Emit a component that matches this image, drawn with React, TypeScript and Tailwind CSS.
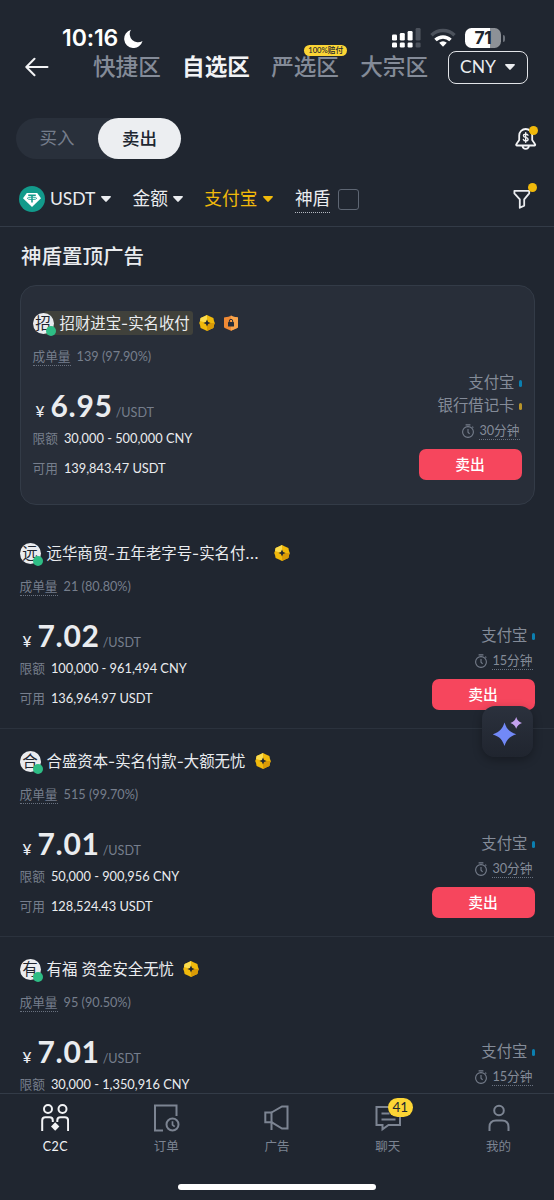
import type { ReactNode } from "react";

type Pay = { label: string; color: string };

type Ad = {
  name: string;
  avatar: string;
  orders: string;
  price: string;
  limit: string;
  available?: string;
  minutes: string;
  pays: Pay[];
};

const ALIPAY: Pay = { label: "支付宝", color: "bg-[#0b7fb0]" };
const BANK: Pay = { label: "银行借记卡", color: "bg-[#b8942a]" };

const topAd: Ad = {
  name: "招财进宝-实名收付",
  avatar: "招",
  orders: "139 (97.90%)",
  price: "6.95",
  limit: "30,000 - 500,000 CNY",
  available: "139,843.47 USDT",
  minutes: "30分钟",
  pays: [ALIPAY, BANK],
};

const ads: Ad[] = [
  {
    name: "远华商贸-五年老字号-实名付...",
    avatar: "远",
    orders: "21 (80.80%)",
    price: "7.02",
    limit: "100,000 - 961,494 CNY",
    available: "136,964.97 USDT",
    minutes: "15分钟",
    pays: [ALIPAY],
  },
  {
    name: "合盛资本-实名付款-大额无忧",
    avatar: "合",
    orders: "515 (99.70%)",
    price: "7.01",
    limit: "50,000 - 900,956 CNY",
    available: "128,524.43 USDT",
    minutes: "30分钟",
    pays: [ALIPAY],
  },
  {
    name: "有福 资金安全无忧",
    avatar: "有",
    orders: "95 (90.50%)",
    price: "7.01",
    limit: "30,000 - 1,350,916 CNY",
    minutes: "15分钟",
    pays: [ALIPAY],
  },
];

function Caret({ className }: { className?: string }) {
  return (
    <svg viewBox="0 0 10 6" fill="currentColor" className={className}>
      <path d="M.8 0h8.4c.7 0 1 .7.5 1.200L5.700 5.600a1 1 0 0 1-1.400 0L.3 1.200C-.2.7.1 0 .8 0z" />
    </svg>
  );
}

function MerchantBadge() {
  return (
    <svg viewBox="0 0 16 18" className="h-[18px] w-4 shrink-0">
      <path d="M8 1l3 1.600 3.400 1.400.6 3 .8 2-.8 2-.6 3L11 15.400 8 17l-3-1.600L1.600 14 1 11 .2 9 1 7l.6-3L5 2.600z" fill="#f0b90b" />
      <path d="M8 1L5 2.600 1.600 4 1 7 8 9z" fill="#fbdc4e" />
      <path d="M15.800 9l-.8 2-.6 3-3.400 1.400L8 17V9z" fill="#d99a06" />
      <path d="M8 5.400l1.100 2.500L11.600 9l-2.500 1.100L8 12.600l-1.100-2.500L4.400 9l2.500-1.100z" fill="#202630" />
    </svg>
  );
}

function ShieldBadge() {
  return (
    <svg viewBox="0 0 16 16" className="h-4 w-4 shrink-0">
      <path d="M2 2.200C4.500 2 6.500 1.400 8 .4c1.500 1 3.500 1.600 6 1.800.6 0 1 .4 1 1v8.600c0 .6-.3 1-.8 1.200L8 15.800 1.800 13c-.5-.2-.8-.6-.8-1.200V3.200c0-.6.4-1 1-1z" fill="#f08a35" />
      <path d="M8 .4c1.500 1 3.500 1.600 6 1.800.6 0 1 .4 1 1v8.600c0 .6-.3 1-.8 1.200L8 15.800z" fill="#f9a54c" />
      <rect x="5" y="7" width="6" height="4.400" rx=".5" fill="#282e39" />
      <path d="M6.300 7V6a1.700 1.700 0 0 1 3.400 0v1" fill="none" stroke="#282e39" strokeWidth={1} />
    </svg>
  );
}

function TimerIcon() {
  return (
    <svg viewBox="0 0 14 14" fill="none" stroke="currentColor" strokeWidth={1.100} className="h-[14px] w-[14px] text-[#757d8b]">
      <circle cx="7" cy="8" r="5.400" />
      <path d="M4.600.9h4.800M7 5v3.200l1.600 1.600M11.300 2.700l1 1" />
    </svg>
  );
}

function TetherIcon() {
  return (
    <svg viewBox="0 0 26 26" className="h-[26px] w-[26px]">
      <circle cx="13" cy="13" r="13" fill="#129a8b" />
      <path d="M7.800 6.900h10.400l3.800 5.300L13 21l-9-8.800z" fill="#fff" />
      <path d="M9.200 9.300h7.600M13 9.300v7.200" stroke="#129a8b" strokeWidth={1.500} fill="none" />
      <ellipse cx="13" cy="12.300" rx="4.700" ry="1.200" stroke="#129a8b" strokeWidth={0.900} fill="none" />
    </svg>
  );
}

function BellIcon() {
  return (
    <svg viewBox="0 0 24 24" fill="none" stroke="currentColor" strokeWidth={1.800} strokeLinejoin="round" strokeLinecap="round" className="h-6 w-6">
      <path d="M5.200 13V8.500a6.500 6.500 0 0 1 13 0V13l2.900 4.200a.8.8 0 0 1-.7 1.300H3a.8.8 0 0 1-.7-1.300z" />
      <path d="M8.500 18.800c.3 2 1.500 3 3.200 3s2.900-1 3.200-3" />
      <path d="M14 8.200c-.4-.8-1.200-1.100-2.300-1.100-1.300 0-2.200.6-2.200 1.600 0 2.400 4.600 1 4.600 3.500 0 1-.9 1.700-2.300 1.700-1.200 0-2.100-.5-2.400-1.400M11.700 5.600v9.700" strokeWidth={1.400} />
    </svg>
  );
}

function FilterIcon() {
  return (
    <svg viewBox="0 0 18 20" fill="none" stroke="currentColor" strokeWidth={1.800} strokeLinejoin="round" className="h-5 w-[18px]">
      <path d="M1.400 1.800h14.800v2.600l-5 6v6.200L6.800 18.800v-8.400l-5.400-6z" />
    </svg>
  );
}

function C2CIcon() {
  return (
    <svg viewBox="0 0 28 28" fill="none" stroke="currentColor" strokeWidth={2} className="h-7 w-7">
      <circle cx="7" cy="5" r="4" />
      <circle cx="21.500" cy="5" r="4" />
      <path d="M1.200 27V16.500c0-2 1.200-3.200 3.200-3.200h4.200c2 0 3.200 1.200 3.200 3.200V18M27.100 27V16.500c0-2-1.200-3.200-3.200-3.200h-4.400c-2 0-3.200 1.200-3.200 3.200V18" />
      <path d="M14.200 18.300l4.200 4.200-4.200 4.200L10 22.500z" fill="currentColor" stroke="none" />
    </svg>
  );
}

function OrdersIcon() {
  return (
    <svg viewBox="0 0 28 28" fill="none" stroke="currentColor" strokeWidth={2} className="h-7 w-7">
      <path d="M11 26.500H3V1.500h21.500v10.500" />
      <circle cx="20.500" cy="20.500" r="6" />
      <path d="M20.500 17.200v3.600l2.200 1.900" strokeWidth={1.700} />
    </svg>
  );
}

function AdsIcon() {
  return (
    <svg viewBox="0 0 28 28" fill="none" stroke="currentColor" strokeWidth={2} className="h-7 w-7">
      <path d="M8.500 8.500H2.300v9.700h6.200z" />
      <path d="M8.500 8.500L19 2.500h5.500v22H19l-10.500-6.300M8.500 18.500V26" />
    </svg>
  );
}

function ChatIcon() {
  return (
    <svg viewBox="0 0 28 28" fill="none" stroke="currentColor" strokeWidth={2} className="h-7 w-7">
      <path d="M26 8v13H14.500l-6 4.300V21h-6V3H20M7.500 9.500h8M7.500 15.500h14" />
    </svg>
  );
}

function MeIcon() {
  return (
    <svg viewBox="0 0 28 28" fill="none" stroke="currentColor" strokeWidth={2} className="h-7 w-7">
      <circle cx="14" cy="6.500" r="4.800" />
      <path d="M4.500 27v-4c0-4 2.500-6.500 6.500-6.500h6c4 0 6.500 2.500 6.500 6.500v4" />
    </svg>
  );
}

function StatusBar() {
  return (
    <div className="flex h-[50px] shrink-0 items-center justify-between pt-[26px] pr-[49px] pl-[62px] text-white">
      <div className="flex items-center gap-[6px]">
        <span className="font-['Inter',sans-serif] text-[23px] leading-6 font-semibold tracking-[-0.1px]">10:16</span>
        <svg viewBox="0 0 20 20" fill="currentColor" className="h-[19px] w-[19px]">
          <path d="M7.300.8A9.800 9.800 0 1 0 19.500 12.600 8.700 8.700 0 0 1 7.300.8z" />
        </svg>
      </div>
      <div className="flex items-center">
        <svg viewBox="0 0 29 20" fill="currentColor" className="h-5 w-[29px]">
          <rect x="0" y="6.500" width="5" height="6" rx="1.300" />
          <rect x="7.800" y="5" width="5" height="7.500" rx="1.300" />
          <rect x="15.600" y="3" width="5" height="9.500" rx="1.300" />
          <rect x="23.600" y="0" width="5" height="12.500" rx="1.300" fill="#4c525c" />
          <rect x="0" y="14.500" width="5" height="5" rx="1.300" />
          <rect x="7.800" y="14.500" width="5" height="5" rx="1.300" />
          <rect x="15.600" y="14.500" width="5" height="5" rx="1.300" />
          <rect x="23.600" y="14.500" width="5" height="5" rx="1.300" fill="#4c525c" />
        </svg>
        <svg viewBox="0 0 26 20" fill="none" stroke="currentColor" strokeWidth={3.500} className="ml-[9px] h-5 w-[26px]">
          <path d="M1.500 7.200a16.500 16.500 0 0 1 23 0" stroke="#4c525c" />
          <path d="M5.500 12a10.800 10.800 0 0 1 15 0" />
          <path d="M13 18.800l-3.800-4a5.500 5.500 0 0 1 7.600 0z" fill="currentColor" stroke="none" />
        </svg>
        <div className="ml-[9px] flex h-5 w-9 items-center justify-center rounded-[6.5px] bg-[linear-gradient(to_right,#fff_70%,#8d9197_70%)] font-['Inter',sans-serif] text-[17.5px] leading-5 font-bold tracking-[-0.3px] text-[#202630]">
          71
        </div>
        <div className="ml-[1.5px] h-[7px] w-[2.5px] rounded-r-full bg-[#6c727b]" />
      </div>
    </div>
  );
}

function ZoneTabs() {
  return (
    <div className="flex h-[34px] shrink-0 items-center pl-[25px] text-[22.6px] leading-[34px] font-medium text-[#848b98]">
      <svg viewBox="0 0 24 20" fill="none" stroke="#f2f3f5" strokeWidth={2} strokeLinecap="round" strokeLinejoin="round" className="h-5 w-6">
        <path d="M22.500 10H1.500M9.500 1.800L1.300 10l8.200 8.200" />
      </svg>
      <span className="ml-[44px]">快捷区</span>
      <span className="ml-[21.3px] font-bold text-[#f2f3f5]">自选区</span>
      <span className="relative ml-[21.3px]">
        严选区
        <span className="absolute -top-[5px] left-[33px] flex h-[11px] w-[43px] items-center justify-center rounded-full bg-[#fcd535] text-[7.7px] leading-[11px] whitespace-nowrap text-[#202630]">
          100%赔付
        </span>
      </span>
      <span className="ml-[21.3px]">大宗区</span>
      <button className="ml-[19.5px] flex h-[33px] w-20 items-center justify-center gap-[9px] rounded-[8px] border-[1.5px] border-[#e2e4e8] text-[17.5px] font-normal text-[#eaecef]">
        CNY
        <Caret className="h-[6px] w-[10px]" />
      </button>
    </div>
  );
}

function SideToggle() {
  return (
    <div className="mt-[34px] flex h-[41px] shrink-0 items-center justify-between pr-4 pl-4">
      <div className="flex h-[41px] w-[165px] items-center rounded-full bg-[#29303b] text-[17.5px]">
        <span className="w-[82px] text-center text-[#757d8b]">买入</span>
        <span className="h-[41px] w-[83px] rounded-full bg-[#eceef1] text-center leading-[41px] font-medium text-[#202630]">卖出</span>
      </div>
      <div className="relative text-[#f2f3f5]">
        <BellIcon />
        <span className="absolute -top-[1px] right-0 h-[9px] w-[9px] rounded-full bg-[#f0b90b]" />
      </div>
    </div>
  );
}

function Filters() {
  return (
    <div className="mt-[13px] flex h-[55px] shrink-0 items-center border-b border-[#333b47] pl-[19px] text-[17.7px] leading-[26px] text-[#eaecef]">
      <TetherIcon />
      <span className="ml-[5px] text-[17.5px]">USDT</span>
      <Caret className="ml-[6px] h-[6px] w-[10px]" />
      <span className="ml-[21px]">金额</span>
      <Caret className="ml-[5.5px] h-[6px] w-[10px]" />
      <span className="ml-[21px] text-[#f0b90b]">支付宝</span>
      <Caret className="ml-[6px] h-[6px] w-[10px] text-[#f0b90b]" />
      <span className="ml-[21.5px] border-b border-dotted border-[#b5bac2]">神盾</span>
      <span className="ml-[8px] h-[21px] w-[21px] rounded-[3px] border-[1.5px] border-[#5e6673]" />
      <div className="relative mr-[23px] ml-auto">
        <FilterIcon />
        <span className="absolute -top-[6px] -right-[6px] h-[9px] w-[9px] rounded-full bg-[#f0b90b]" />
      </div>
    </div>
  );
}

function AdBody({ ad, pinned = false }: { ad: Ad; pinned?: boolean }) {
  return (
    <>
      <div className="flex h-6 items-center">
        <div className="relative z-10 h-[21px] w-[21px] shrink-0 rounded-full bg-[#eaecef] text-center text-[15.5px] leading-[20px] text-[#202630]">
          {ad.avatar}
          <span className="absolute -right-[2px] -bottom-[2px] h-[10px] w-[10px] rounded-full bg-[#2ebd85]" />
        </div>
        {pinned ? (
          <span className="-ml-[10px] h-6 rounded-[3px] bg-[#40413b] pr-[3px] pl-4 font-['Inter','Noto_Sans_CJK_SC',sans-serif] text-[15.4px] leading-[26px] text-[#eaecef]">
            {ad.name}
          </span>
        ) : (
          <span className="ml-[6px] h-6 font-['Inter','Noto_Sans_CJK_SC',sans-serif] text-[15.4px] leading-[26px] text-[#eaecef]">{ad.name}</span>
        )}
        <div className={pinned ? "ml-[6px] flex items-center gap-2" : ad.name.endsWith("...") ? "ml-[15px]" : "ml-[9.5px]"}>
          <MerchantBadge />
          {pinned && <ShieldBadge />}
        </div>
      </div>
      <div className="mt-[11px] flex h-5 items-center text-[12.7px] leading-[18px] text-[#767e8c]">
        <span className="border-b border-dotted border-[#69717f]">成单量</span>
        <span className="ml-[6px] text-[12.7px]">{ad.orders}</span>
      </div>
      <div className="flex h-[114px] items-end justify-between">
        <div className="pb-[2px]">
          <div className="flex h-[30px] items-baseline text-[#eaecef]">
            <span className="w-[18px] pl-[3px] text-[15.5px] font-medium">¥</span>
            <span className="text-[30px] leading-[28px] font-bold tracking-[0.7px]">{ad.price}</span>
            <span className="ml-[3px] text-[12.6px] text-[#767e8c]">/USDT</span>
          </div>
          <div className="mt-[7px] h-5 text-[12.7px] leading-5 text-[#767e8c]">
            限额<span className="ml-[6px] text-[12.8px] text-[#eaecef]">{ad.limit}</span>
          </div>
          <div className="mt-[10px] h-5 text-[12.7px] leading-5 text-[#767e8c]">
            {ad.available && (
              <>
                可用<span className="ml-[6px] text-[12.8px] text-[#eaecef]">{ad.available}</span>
              </>
            )}
          </div>
        </div>
        <div className="flex flex-col items-end text-[#848b98]">
          {ad.pays.map((pay) => (
            <div key={pay.label} className="flex h-[23px] items-center gap-1 text-[15.4px]">
              {pay.label}
              <span className={`mt-[2px] h-[7px] w-[3px] rounded-full ${pay.color}`} />
            </div>
          ))}
          <div className="mt-1 mr-[2px] flex h-5 items-center gap-[4px] text-[12.7px] leading-[17px]">
            <TimerIcon />
            <span className="border-b border-dotted border-[#69717f]">{ad.minutes}</span>
          </div>
          <button className="mt-2 h-[31px] w-[103px] rounded-[7px] bg-[#f6465d] text-[14.8px] leading-[31px] font-medium text-white">卖出</button>
        </div>
      </div>
    </>
  );
}

function NavItem({ icon, label, active, badge }: { icon: ReactNode; label: string; active?: boolean; badge?: string }) {
  return (
    <div className={active ? "flex flex-col items-center text-[#f2f3f5]" : "flex flex-col items-center text-[#7c8492]"}>
      <div className="relative">
        {icon}
        {badge && (
          <span className="absolute -top-[6px] left-[14px] h-[19px] w-[25px] rounded-full bg-[#fcd535] text-center text-[13.5px] leading-[19px] text-[#202630]">
            {badge}
          </span>
        )}
      </div>
      <span className={active ? "mt-[5px] text-[12.5px] leading-5 tracking-[0.5px]" : "mt-[5px] text-[12.5px] leading-5"}>{label}</span>
    </div>
  );
}

export default function App() {
  return (
    <div className="relative flex h-[1200px] w-[554px] flex-col overflow-hidden bg-[#202630] font-['Lato','Noto_Sans_CJK_SC',sans-serif] text-[#eaecef]">
      <StatusBar />
      <ZoneTabs />
      <SideToggle />
      <Filters />

      <main className="min-h-0 flex-1 overflow-hidden">
        <h2 className="mt-[15px] pl-[21px] text-[20.5px] leading-7 font-medium">神盾置顶广告</h2>
        <section className="mx-[19.5px] mt-[15px] h-[220px] rounded-[16px] border border-[#333b47] bg-[#282e39] px-3 pt-[25px]">
          <AdBody ad={topAd} pinned />
        </section>
        <div className="mt-[16px]">
          {ads.map((ad) => (
            <section key={ad.name} className="h-[208px] border-b border-[#2b323d] px-[19.5px] pt-5">
              <AdBody ad={ad} />
            </section>
          ))}
        </div>
      </main>

      {/* floating assistant */}
      <button className="absolute top-[706px] left-[482px] flex h-[51px] w-[51px] items-center justify-center rounded-[13px] bg-linear-to-b from-[#2b313d] to-[#20252f] shadow-[0_3px_10px_rgba(0,0,0,0.3)]">
        <svg viewBox="0 0 30 30" className="h-[30px] w-[30px]">
          <path d="M11.500 5.500C13.700 12 16 14.700 23.300 17.300 16 19.900 13.700 22.500 11.500 29 9.300 22.500 7 19.900-.3 17.300 7 14.700 9.300 12 11.500 5.500z" fill="#7289f7" />
          <path d="M23.200 0c1.100 3.300 2.500 4.700 5.800 5.900-3.300 1.200-4.700 2.600-5.800 5.900-1.100-3.300-2.500-4.700-5.800-5.900 3.300-1.200 4.700-2.600 5.800-5.900z" fill="#c3a1ee" />
        </svg>
      </button>

      <nav className="flex h-[107px] shrink-0 flex-col border-t border-[#333b47] bg-[#202630]">
        <div className="grid grid-cols-5 pt-[10px]">
          <NavItem icon={<C2CIcon />} label="C2C" active />
          <NavItem icon={<OrdersIcon />} label="订单" />
          <NavItem icon={<AdsIcon />} label="广告" />
          <NavItem icon={<ChatIcon />} label="聊天" badge="41" />
          <NavItem icon={<MeIcon />} label="我的" />
        </div>
        <div className="mx-auto mt-auto mb-[10px] h-[6px] w-[198px] rounded-full bg-white" />
      </nav>
    </div>
  );
}
